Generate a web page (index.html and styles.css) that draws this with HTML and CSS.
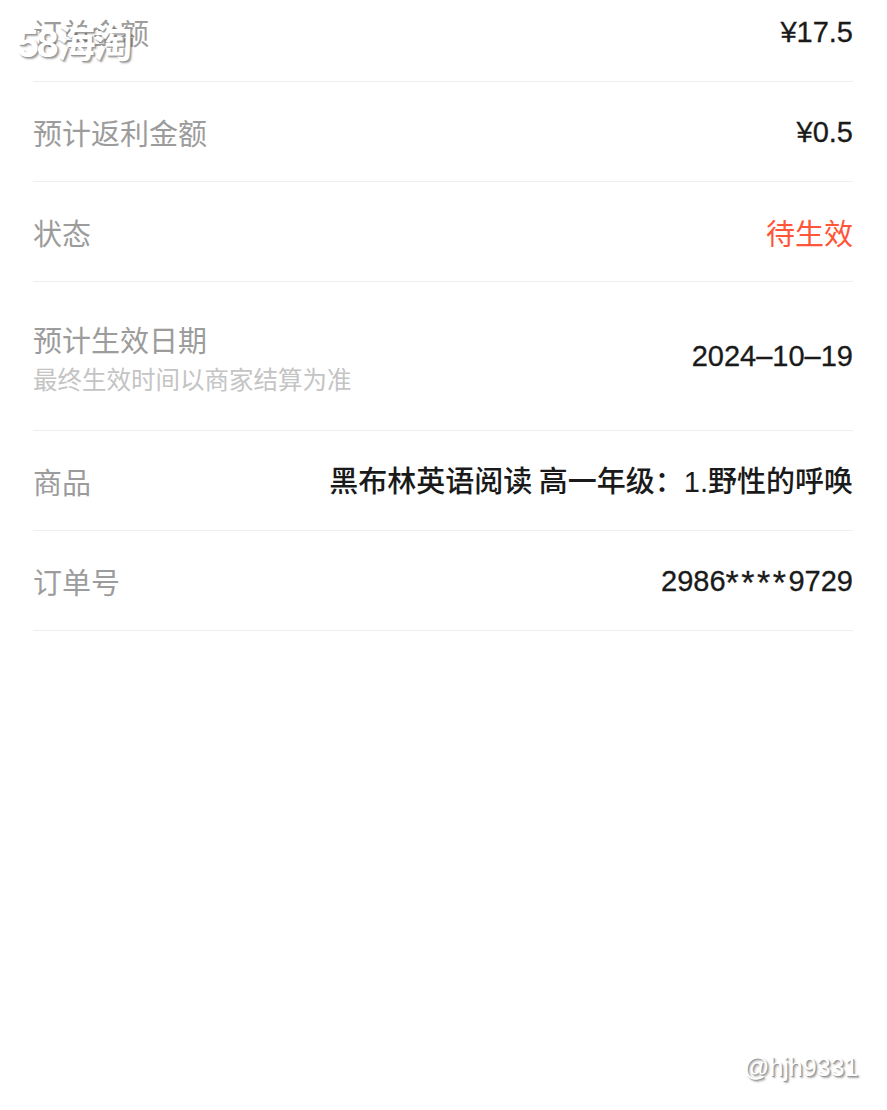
FILE: index.html
```html
<!doctype html>
<html>
<head>
    <meta charset="UTF-8">
    <title>订单详情</title>
    <link rel="stylesheet" href="styles.css">
</head>
<body>
<div class="page">
    <ul class="info_list">
        <li class="row">
            <div class="label">订单金额</div>
            <div class="val num">¥17.5</div>
        </li>
        <li class="row">
            <div class="label">预计返利金额</div>
            <div class="val num">¥0.5</div>
        </li>
        <li class="row">
            <div class="label">状态</div>
            <div class="val val_red">待生效</div>
        </li>
        <li class="row row_tall">
            <div class="label">
                预计生效日期
                <div class="sub">最终生效时间以商家结算为准</div>
            </div>
            <div class="val num">2024–10–19</div>
        </li>
        <li class="row">
            <div class="label">商品</div>
            <div class="val">黑布林英语阅读 高一年级：<span class="num">1.</span>野性的呼唤</div>
        </li>
        <li class="row">
            <div class="label">订单号</div>
            <div class="val num">2986<span class="stars">****</span>9729</div>
        </li>
    </ul>
    <div class="mark mark_tl">58海淘</div>
    <div class="mark mark_br">@hjh9331</div>
</div>
</body>
</html>
```

FILE: styles.css
```css
html,body{margin:0;padding:0;background:#fff}
body{font-family:"Noto Sans CJK SC","Noto Sans",sans-serif;}
.page{width:887px;height:1110px;overflow:hidden;position:relative}
/* 页面向上滚动了一截，第一行被截掉 */
.info_list{list-style:none;margin:-18px 0 0;padding:0 34px 0 33px}
.row{display:flex;justify-content:space-between;align-items:center;height:99px;border-bottom:1px solid #eeeeee}
.row_tall{height:148px}
.label{font-size:29px;color:#9c9c9c;line-height:38px;font-weight:400}
.sub{font-size:24.5px;color:#c4c4c4;line-height:34px;margin-top:4px}
.row_tall .label{margin-top:4px}
.val{font-size:29px;color:#1a1a1a;font-weight:500;line-height:38px;white-space:nowrap}
.num{font-family:"Liberation Sans","Noto Sans CJK SC",sans-serif;font-weight:400}
.val.num{font-size:29px;-webkit-text-stroke:0.3px #1a1a1a}
/* 星号比数字宽大一些 */
.stars{font-size:34px;letter-spacing:2.5px;vertical-align:-3px;line-height:20px}
.val_red{color:#ff5538;font-weight:400}
/* 水印 */
.mark{position:absolute;color:#fff;font-family:"Liberation Sans","Noto Sans CJK SC",sans-serif;font-weight:700;
    text-shadow:1px 1px 0 #999,2px 2px 2px rgba(0,0,0,.35)}
.mark_tl{left:17px;top:12px;font-size:39px;letter-spacing:-2px}
.mark_br{left:744px;top:1053px;font-size:25px;font-weight:400}
```
